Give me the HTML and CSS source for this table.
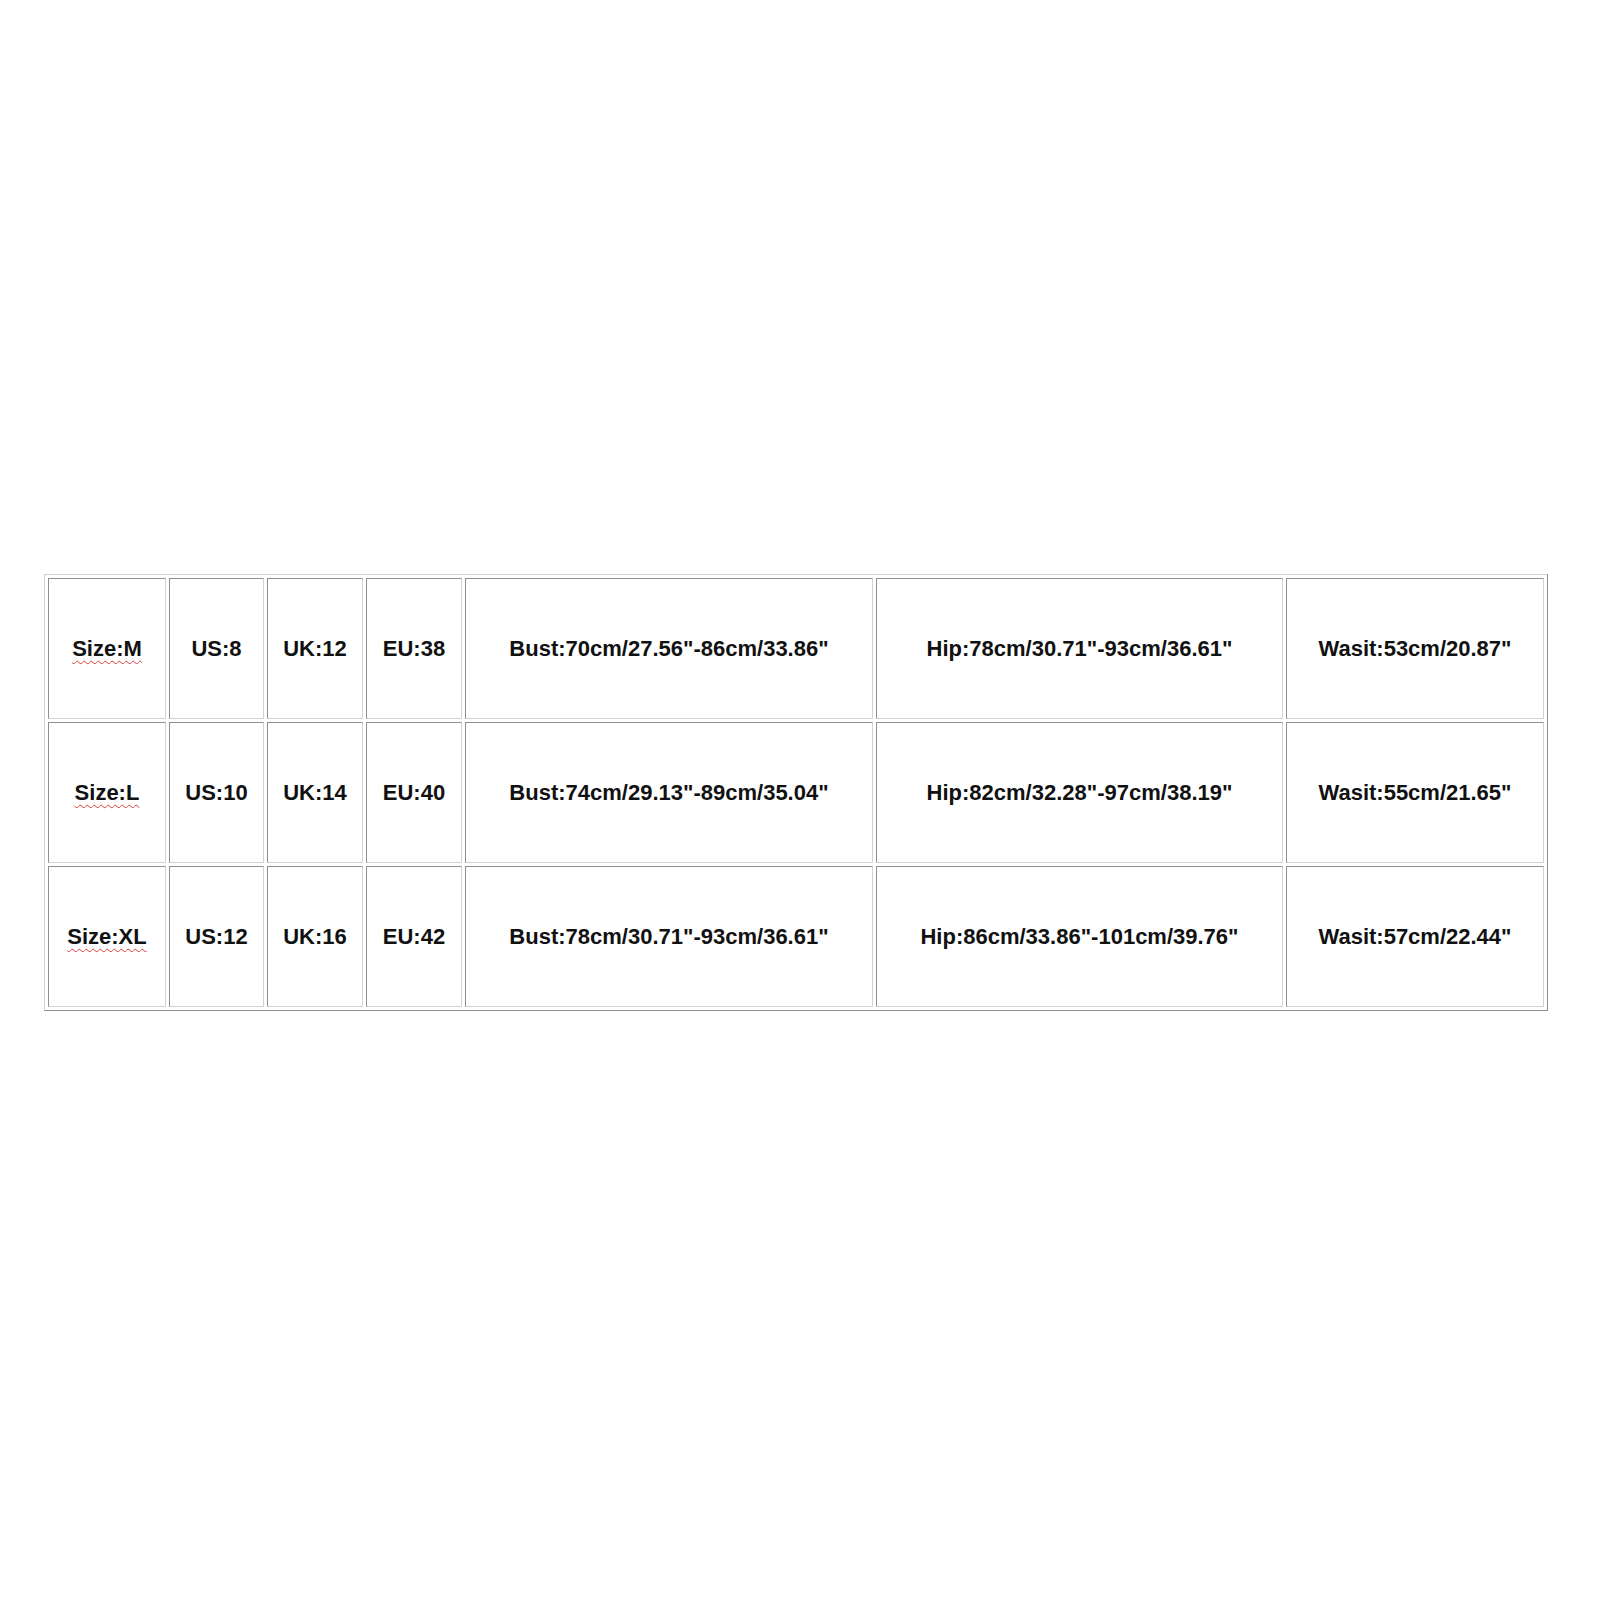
FILE: index.html
```html
<!DOCTYPE html>
<html>
<head>
<meta charset="utf-8">
<title>Size chart</title>
<link rel="stylesheet" href="styles.css">
</head>
<body>
<table class="sizes">
  <colgroup>
    <col class="c1"><col class="c2"><col class="c3"><col class="c4"><col class="c5"><col class="c6"><col class="c7">
  </colgroup>
  <tr>
    <td><span class="spell">Size:M</span></td>
    <td>US:8</td>
    <td>UK:12</td>
    <td>EU:38</td>
    <td>Bust:70cm/27.56"-86cm/33.86"</td>
    <td>Hip:78cm/30.71"-93cm/36.61"</td>
    <td>Wasit:53cm/20.87"</td>
  </tr>
  <tr>
    <td><span class="spell">Size:L</span></td>
    <td>US:10</td>
    <td>UK:14</td>
    <td>EU:40</td>
    <td>Bust:74cm/29.13"-89cm/35.04"</td>
    <td>Hip:82cm/32.28"-97cm/38.19"</td>
    <td>Wasit:55cm/21.65"</td>
  </tr>
  <tr>
    <td><span class="spell">Size:XL</span></td>
    <td>US:12</td>
    <td>UK:16</td>
    <td>EU:42</td>
    <td>Bust:78cm/30.71"-93cm/36.61"</td>
    <td>Hip:86cm/33.86"-101cm/39.76"</td>
    <td>Wasit:57cm/22.44"</td>
  </tr>
</table>
</body>
</html>
```

FILE: styles.css
```css
html, body {
  margin: 0;
  padding: 0;
  background: #ffffff;
}

body {
  font-family: "Liberation Sans", Arial, sans-serif;
  color: #111111;
}

.sizes {
  margin: 574px 0 0 44px;
  table-layout: fixed;
  border-collapse: separate;
  border-spacing: 3px;
  border: 1px solid;
  border-color: #d0d0d0 #8f8f8f #8f8f8f #d0d0d0;
}

.sizes td {
  box-sizing: border-box;
  height: 141px;
  padding: 0;
  border: 1px solid;
  border-color: #8f8f8f #d2d2d2 #d2d2d2 #8f8f8f;
  text-align: center;
  vertical-align: middle;
  font-size: 22px;
  font-weight: bold;
  white-space: nowrap;
}

.c1 { width: 118px; }
.c2 { width: 95px; }
.c3 { width: 96px; }
.c4 { width: 96px; }
.c5 { width: 408px; }
.c6 { width: 407px; }
.c7 { width: 258px; }

.spell {
  text-decoration: underline wavy #d23c3c;
  text-decoration-thickness: 1px;
  text-underline-offset: 4px;
}
```
